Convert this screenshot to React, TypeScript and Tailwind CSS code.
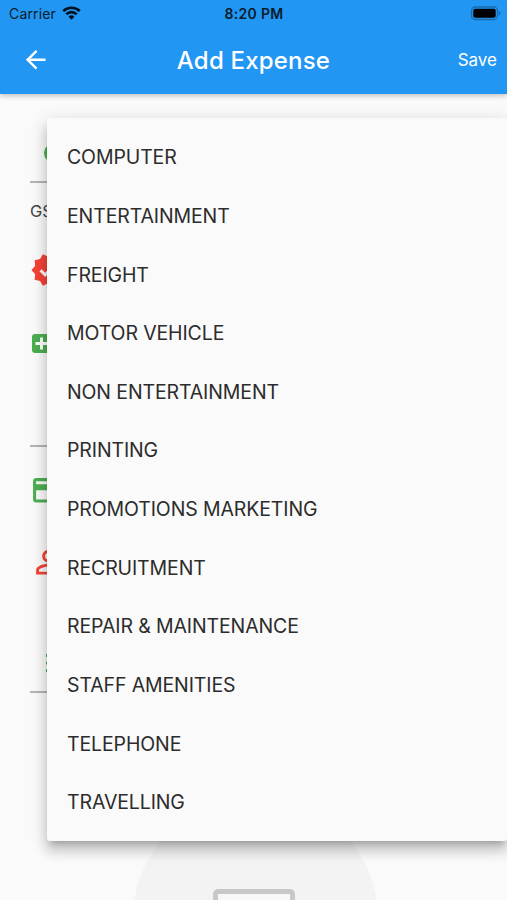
import React from "react";
import { MdArrowBack, MdCreditCard, MdPersonOutline, MdVerified } from "react-icons/md";

const categories = [
  "COMPUTER",
  "ENTERTAINMENT",
  "FREIGHT",
  "MOTOR VEHICLE",
  "NON ENTERTAINMENT",
  "PRINTING",
  "PROMOTIONS MARKETING",
  "RECRUITMENT",
  "REPAIR & MAINTENANCE",
  "STAFF AMENITIES",
  "TELEPHONE",
  "TRAVELLING",
];

function StatusBar() {
  return (
    <div className="grid h-[27px] grid-cols-3 items-center text-[#0b1c2c]">
      <div className="flex items-center gap-[6px] pl-[9px]">
        <span className="text-[14px] tracking-[0.15px]">Carrier</span>
        <svg className="-mt-[2px]" width="19" height="14" viewBox="0 0 19 14" fill="none" stroke="#04121f" strokeWidth="2.7">
          <path d="M1.2 5.1a11.9 11.9 0 0 1 16.6 0" />
          <path d="M4.3 8.3a7.4 7.4 0 0 1 10.4 0" />
          <path d="M9.5 13.7 6.6 10.8a4.1 4.1 0 0 1 5.8 0z" fill="#04121f" stroke="none" />
        </svg>
      </div>
      <span className="pl-px text-center text-[14px] font-semibold tracking-[0.3px]">8:20 PM</span>
      <div className="flex justify-end pr-[6px]">
        <svg width="31" height="15" viewBox="0 0 31 15">
          <rect x="1.5" y="1" width="26" height="12.5" rx="3.8" fill="none" stroke="#1a6bad" strokeWidth="1.3" />
          <rect x="3.3" y="2.8" width="22.4" height="9" rx="2" fill="#000" />
          <path d="M28.8 5v4.6q1.7-.6 1.7-2.3T28.8 5" fill="#1a6bad" />
        </svg>
      </div>
    </div>
  );
}

function Header() {
  return (
    <header className="relative h-[94px] bg-[#2196f3] shadow-[0_2px_5px_rgba(0,0,0,0.22)]">
      <StatusBar />
      <div className="grid h-[65px] grid-cols-[100px_1fr_100px] items-center text-white">
        <MdArrowBack className="ml-[20.5px] size-[29.4px]" />
        <h1 className="pt-[2px] text-center text-[24px] font-medium tracking-[0.2px]">Add Expense</h1>
        <span className="pt-[2px] pr-[10px] text-right text-[17px]">Save</span>
      </div>
    </header>
  );
}

function ExpenseForm() {
  return (
    <div className="flex flex-col pl-[30px]">
      <div className="h-[89px] border-b-2 border-[#b4b4b4] pt-[49px]">
        <div className="ml-[14px] size-[20px] rounded-full bg-[#4caf50]" />
      </div>
      <div className="flex h-[57px] items-center text-[16.5px] text-[#444]">GST</div>
      <div className="flex h-[59px] items-center text-[#f44336]">
        <MdVerified className="size-[36px]" />
      </div>
      <div className="flex h-[88px] items-center pl-[1.7px]">
        <svg width="19" height="19" viewBox="0 0 19 19">
          <rect width="19" height="19" rx="3" fill="#4caf50" />
          <path d="M9.5 3.5v12M3.5 9.5h12" stroke="#fff" strokeWidth="3" />
        </svg>
      </div>
      <div className="h-[60px] border-b-2 border-[#b4b4b4]" />
      <div className="flex h-[86px] items-center text-[#4caf50]">
        <MdCreditCard className="size-[36.7px]" />
      </div>
      <div className="flex h-[59px] items-center text-[#f44336]">
        <MdPersonOutline className="size-[36.7px]" />
      </div>
      <div className="h-[101px] border-b-2 border-[#b4b4b4] pt-[61px]">
        <svg className="ml-[15.7px]" width="24" height="20" viewBox="0 0 24 20" fill="#4caf50">
          <path d="M0 1h3v3H0zM0 8.5h3v3H0zM0 16h3v3H0zM6 1h16v3H6zM6 8.5h16v3H6zM6 16h16v3H6z" />
        </svg>
      </div>
    </div>
  );
}

function ReceiptPlaceholder() {
  return (
    <div className="mt-[103px] ml-[132.5px] flex size-[245px] shrink-0 justify-center rounded-full bg-[#f3f3f3] pt-[93px]">
      <div className="-ml-[2px] h-[60px] w-[82px] rounded-[5px] border-[5px] border-[#c8c8c8] bg-[#f8f8f8]" />
    </div>
  );
}

function CategoryMenu() {
  return (
    <ul className="absolute top-[118px] left-[47px] h-[723px] w-[460px] rounded-[3px] bg-[#fafafa] pt-[10.6px] shadow-[0_6px_6px_-4px_rgba(0,0,0,0.2),0_10px_12px_1px_rgba(0,0,0,0.14),0_4px_17px_2px_rgba(0,0,0,0.12)]">
      {categories.map((name) => (
        <li
          key={name}
          className="flex h-[58.65px] items-center pl-[20px] text-[19.5px] tracking-[-0.12px] whitespace-nowrap text-[#2c2c2c]"
        >
          {name}
        </li>
      ))}
    </ul>
  );
}

export default function App() {
  return (
    <main className="relative h-[900px] w-[507px] overflow-hidden bg-[#fafafa] font-['Inter',sans-serif]">
      <Header />
      <ExpenseForm />
      <ReceiptPlaceholder />
      <CategoryMenu />
    </main>
  );
}
